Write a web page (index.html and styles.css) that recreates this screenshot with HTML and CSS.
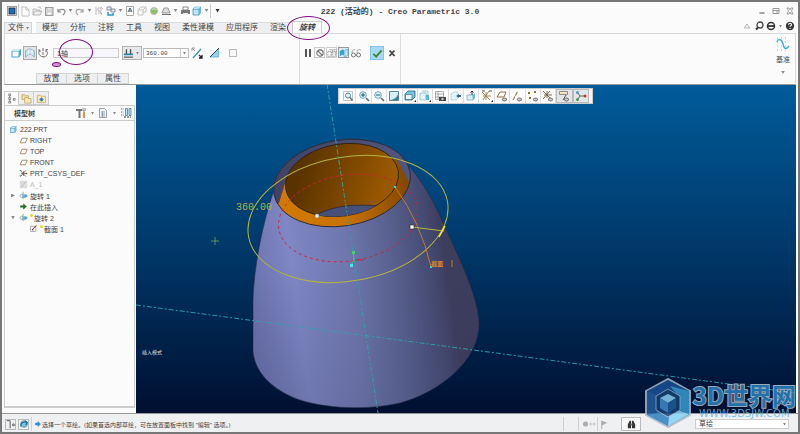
FILE: index.html
```html
<!DOCTYPE html>
<html lang="zh-CN">
<head>
  <meta charset="UTF-8">
  <title>222 (活动的) - Creo Parametric 3.0</title>
  <link rel="stylesheet" href="styles.css">
</head>
<body>
  <!-- shared icons -->
  <svg class="sprite" aria-hidden="true">
    <symbol id="i-app" viewBox="0 0 12 12"><rect x="1.500" y="1.500" width="9" height="9" fill="#f4f4f4" stroke="#888" stroke-width=".8"/><rect x="3" y="3" width="6" height="6" fill="#1671b8" stroke="#223" stroke-width=".8"/></symbol>
    <symbol id="i-new" viewBox="0 0 12 12"><path d="M3 2h4l3 3v6H3z M7 2v3h3" fill="#fff" stroke="#b5b5b5" stroke-width=".8"/></symbol>
    <symbol id="i-open" viewBox="0 0 12 12"><path d="M2 10V4h3l1 1h3v2M2 10l2-4h7l-2 4z M7 3c1-2 3-1 3 1" fill="#eee" stroke="#aaa" stroke-width=".8"/></symbol>
    <symbol id="i-save" viewBox="0 0 12 12"><rect x="2.500" y="2.500" width="7.500" height="8" fill="#e4e4e4" stroke="#999"/><path d="M4 3h5v2H4z M4 7h5v3H4z" fill="#fff" stroke="#aaa" stroke-width=".6"/></symbol>
    <symbol id="i-undo" viewBox="0 0 12 12"><path d="M3 4v3h3M3 7c2-4 7-3 7 0 0 1-1 2-2 3" fill="none" stroke="#8b8b8b" stroke-width="1.200"/></symbol>
    <symbol id="i-redo" viewBox="0 0 12 12"><path d="M9 4v3H6M9 7c-2-4-7-3-7 0 0 1 1 2 2 3" fill="none" stroke="#a5a5a5" stroke-width="1.200"/></symbol>
    <symbol id="i-regen" viewBox="0 0 12 12"><path d="M3 2v8M5 3h3v3H5zM5 8h4M8 2l2 2M7 6l2 4" fill="none" stroke="#bbb"/></symbol>
    <symbol id="i-windows" viewBox="0 0 12 12"><path d="M2 2h4v3H2zM6 4h4v3H6z" fill="#dff1fa" stroke="#778" stroke-width=".8"/><path d="M3 7v3h5V8" fill="none" stroke="#2893c8" stroke-width="1.500"/></symbol>
    <symbol id="i-page" viewBox="0 0 12 12"><path d="M2.500 1.500h7v9h-7z" fill="#fff" stroke="#aaa"/><path d="M4 7l2-4 2 4M5 6h2" fill="none" stroke="#345" stroke-width=".9"/></symbol>
    <symbol id="i-boxes" viewBox="0 0 12 12"><path d="M2 5h5v5H2zM5 2h5v5H7M2 5l3-3M7 5l3-3" fill="none" stroke="#c4c4c4"/></symbol>
    <symbol id="i-ball" viewBox="0 0 12 12"><circle cx="6" cy="6" r="3.500" fill="#85c266" stroke="#bbb"/><path d="M4 5c2-2 3-1 4 0" stroke="#dff4c8" fill="none"/></symbol>
    <symbol id="i-scan" viewBox="0 0 12 12"><path d="M2 8l2-5h4l2 5z" fill="#ddd" stroke="#999"/><path d="M2 9h9v1H2z" fill="#777"/></symbol>
    <symbol id="i-print" viewBox="0 0 12 12"><path d="M4 2h5v3H4z" fill="#fff" stroke="#888"/><path d="M2 5h9v4H2z" fill="#777"/><path d="M4 8h5v2H4z" fill="#eee"/></symbol>
    <symbol id="i-cube" viewBox="0 0 12 12"><path d="M2 4h6v6H2z" fill="#bfe5f5" stroke="#3b97bd" stroke-width=".8"/><path d="M2 4l2-2h6v6l-2 2V4z" fill="#64b7dc"/><path d="M2 4l2-2h6L8 4z" fill="#e5f6fc" stroke="#3b97bd" stroke-width=".5"/></symbol>
    <symbol id="i-solid" viewBox="0 0 12 12"><path d="M2 4h7v6H2z" fill="#fff" stroke="#4aa3c9" /><path d="M2 4l1.500-2h7.500v6L9 10V4z" fill="#4aa9cf"/><path d="M2 4l1.500-2H11L9 4z" fill="#cbeaf6"/></symbol>
    <symbol id="i-surface" viewBox="0 0 12 12"><path d="M1.500 10V4l3-2c1 0 3 0 4 1l2 1v6l-2.500-2c-1-1-3-1-4 0z" fill="#c5e7f5" stroke="#86a8b8" stroke-width=".8"/><path d="M4.500 2.500v5M8 3v5" stroke="#eefaff"/></symbol>
    <symbol id="i-revolve" viewBox="0 0 12 12"><path d="M6 1v9" stroke="#666" stroke-dasharray="3 1"/><path d="M3 3c-3 3 0 7 4 7 4-1 4-5 2-7M9 5V2.500h2M1 3h2v2" fill="none" stroke="#666" stroke-width=".9"/></symbol>
    <symbol id="i-depth" viewBox="0 0 12 12"><path d="M1 10.500h10" stroke="#333"/><path d="M1 7.500h10" stroke="#2183b5" stroke-width="1.800"/><path d="M3 2h1.500v5H3zM7.500 2H9v5H7.500z" fill="#555"/></symbol>
    <symbol id="i-flip" viewBox="0 0 12 12"><path d="M2 11l8-9" stroke="#3d89ad" stroke-width="1.200"/><path d="M1 4V1h3M1 1l3 3" stroke="#999" fill="none"/><path d="M11 8v3H8M11 11L8 8" stroke="#222" stroke-width="1.300" fill="none"/></symbol>
    <symbol id="i-cut" viewBox="0 0 12 12"><path d="M1 10L9.500 1.500V10z" fill="#8fd5ee" stroke="#67a6bf" stroke-width=".8"/><path d="M1 10L10 1" stroke="#345"/></symbol>
    <symbol id="i-pause" viewBox="0 0 12 12"><path d="M3 2h2v8H3zM7 2h2v8H7z" fill="#555"/></symbol>
    <symbol id="i-none" viewBox="0 0 12 12"><circle cx="6" cy="6" r="3.800" fill="none" stroke="#666" stroke-width="1.300"/><path d="M3.500 3.500l5 5" stroke="#666" stroke-width="1.300"/></symbol>
    <symbol id="i-ghost" viewBox="0 0 12 12"><path d="M1 4h4v6H1zM3 2h4v6M6 4h4v6H6zM8 2h3v6" fill="none" stroke="#888" stroke-dasharray="1.500 .7"/></symbol>
    <symbol id="i-attach" viewBox="0 0 12 12"><path d="M1 4l2-2h3v6H4L1 10z" fill="#35a5d6"/><path d="M6 4l2-2h3v6L9 10H6z" fill="#b6e4f5" stroke="#3993b8" stroke-width=".7"/></symbol>
    <symbol id="i-glasses" viewBox="0 0 12 12"><circle cx="3.500" cy="8" r="2" fill="none" stroke="#777" /><circle cx="8.500" cy="8" r="2" fill="none" stroke="#777"/><path d="M2 6c0-3 2-4 3-3M7 6c0-3 2-4 4-3M5.500 8h1" fill="none" stroke="#888" stroke-width=".8"/></symbol>
    <symbol id="i-check" viewBox="0 0 12 12"><path d="M1.500 6.500l3 3 6-7" fill="none" stroke="#3d8a2c" stroke-width="2"/></symbol>
    <symbol id="i-cross" viewBox="0 0 12 12"><path d="M3.500 3.500l5 5.500M8.500 3.500l-5 5.500" stroke="#444" stroke-width="1.800"/></symbol>
    <symbol id="i-up" viewBox="0 0 12 12"><path d="M3 8l3-4 3 4z" fill="#eee" stroke="#bbb"/></symbol>
    <symbol id="i-search" viewBox="0 0 12 12"><circle cx="7" cy="5" r="3" fill="#fff" stroke="#444" stroke-width="1.300"/><path d="M5 7.500L3 9.500" stroke="#333" stroke-width="2"/></symbol>
    <symbol id="i-globe" viewBox="0 0 12 12"><circle cx="6" cy="6" r="3.500" fill="#fff" stroke="#333" stroke-width="1.500"/><path d="M2 6h8" stroke="#333" stroke-width="1.800"/></symbol>
    <symbol id="i-help" viewBox="0 0 12 12"><circle cx="6" cy="6" r="4.200" fill="#3a3a3a"/><path d="M4.500 4.800c0-2 3-2 3 0 0 1-1.500 1-1.500 2M6 8v1" fill="none" stroke="#fff" stroke-width="1.100"/></symbol>
    <symbol id="i-min" viewBox="0 0 12 12"><path d="M3.500 8h5" stroke="#888" stroke-width="1.500"/></symbol>
    <symbol id="i-max" viewBox="0 0 12 12"><path d="M3 3.500h6v5H3z M3 5.500h6M6 7h2" fill="none" stroke="#999"/></symbol>
    <symbol id="i-close" viewBox="0 0 12 12"><path d="M3 3h2l1 2 1-2h2L7.500 6 9 9H7L6 7 5 9H3l1.500-3z" fill="#fff" stroke="#888" stroke-width=".8"/></symbol>
    <symbol id="i-datum" viewBox="0 0 14 14"><path d="M1 1h12M1 5h12M1 9h12M1 13h12" stroke="#aaa" stroke-dasharray="1 3"/><path d="M1 5c1-4 5-3 6 2s3 6 6 2" fill="none" stroke="#3dabd9" stroke-width="1.300"/></symbol>
    <symbol id="i-tree" viewBox="0 0 12 12"><path d="M3 1h2v2H3zM3 5h2v2H3zM3 9h2v2H3zM8 6h2v2H8zM4 3v2M4 7v2" fill="none" stroke="#777" stroke-width=".9"/></symbol>
    <symbol id="i-folders" viewBox="0 0 12 12"><path d="M1 2h3l1 1h3v4H1z" fill="#f3dfaa" stroke="#c29b52" stroke-width=".8"/><path d="M4 5h3l1 1h3v5H4z" fill="#fae9bd" stroke="#c29b52" stroke-width=".8"/></symbol>
    <symbol id="i-fav" viewBox="0 0 12 12"><path d="M1.500 2.500h3l1 1h5v7h-9z" fill="#f7e8bb" stroke="#c8a362" stroke-width=".8"/><path d="M6 4.500l2.500 2.500L6 9.500 3.500 7z" fill="#3f7f99"/></symbol>
    <symbol id="i-tools" viewBox="0 0 12 12"><path d="M1 2h6v2H1zM3.500 4h2v7h-2z" fill="#777"/><path d="M8 5h2v6H8z" fill="#cc9b4d"/><path d="M8 1v3h2V1" fill="none" stroke="#888"/></symbol>
    <symbol id="i-list" viewBox="0 0 12 12"><path d="M2.500 1.500h5l2 2v7h-7z" fill="#f5f8fa" stroke="#888" stroke-width=".8"/><path d="M4 5h4M4 7h4M4 9h4M5.500 4v6" stroke="#789" stroke-width=".7"/></symbol>
    <symbol id="i-columns" viewBox="0 0 12 12"><path d="M1 2h3M1 5h3M1 8h3" stroke="#777" stroke-dasharray="1 .6"/><path d="M5.500 1.500h2v7h-2zM9 1.500h2v7H9z" fill="#bfe4f4" stroke="#4383a0" stroke-width=".8"/><path d="M4 10h7" stroke="#333" stroke-dasharray="2 1"/></symbol>
    <symbol id="i-plane" viewBox="0 0 12 12"><path d="M4 3h7L8.500 9H1.500z" fill="#fff" stroke="#8d6d43"/></symbol>
    <symbol id="i-csys" viewBox="0 0 12 12"><path d="M2 2l7 8M9 2L2 10M6 3v6M3 6h8" stroke="#6d5030" stroke-width="1"/><path d="M1 2h2M1 9h2M10 5v2" stroke="#444"/></symbol>
    <symbol id="i-axis" viewBox="0 0 12 12"><path d="M1 1h10v10H1z" fill="#ddd"/><path d="M3 10L9 2" stroke="#aaa" stroke-dasharray="4 1"/></symbol>
    <symbol id="i-rev" viewBox="0 0 12 12"><path d="M1 7c1-3 3-4 4-3v5c-2 0-3-1-4-2z" fill="#d9eef7" stroke="#6b97aa" stroke-width=".8"/><path d="M6 5c2-1 4-1 5 1s-2 3-5 3z" fill="#52a8cf"/><path d="M5.500 1v10" stroke="#668" stroke-width=".7"/></symbol>
    <symbol id="i-insert" viewBox="0 0 12 12"><path d="M2 5h4V2.500L10 6 6 9.500V7H2z" fill="#1c7d1c" stroke="#124f12" stroke-width=".6"/></symbol>
    <symbol id="i-sketch" viewBox="0 0 12 12"><path d="M2 3h7v7H2z" fill="#fff" stroke="#999"/><path d="M4 8l6-6" stroke="#a33" stroke-width="1.400"/><path d="M4 8h2" stroke="#333"/></symbol>
    <symbol id="i-refit" viewBox="0 0 12 12"><path d="M1.500 1.500h9v9h-9z" fill="#f5fafc" stroke="#aaa" stroke-width=".7"/><circle cx="6" cy="5.500" r="2.500" fill="#e3f4fa" stroke="#4f839b"/><path d="M8 7.500l2.500 3" stroke="#667" stroke-width="1.300"/></symbol>
    <symbol id="i-zoomin" viewBox="0 0 12 12"><circle cx="5" cy="5" r="3.300" fill="#ddf2fb" stroke="#6ea6c2"/><path d="M3 5h4M5 3v4" stroke="#1c5876"/><path d="M8 8l3 3" stroke="#567" stroke-width="1.600"/></symbol>
    <symbol id="i-zoomout" viewBox="0 0 12 12"><circle cx="5" cy="5" r="3.300" fill="#ddf2fb" stroke="#6ea6c2"/><path d="M3 5h4" stroke="#1c5876"/><path d="M8 8l3 3" stroke="#567" stroke-width="1.600"/></symbol>
    <symbol id="i-repaint" viewBox="0 0 12 12"><path d="M1.500 1.500h9v9h-9z" fill="#d9eff8" stroke="#5c8396"/><path d="M2 10c4 0 8-3 8-7v7z" fill="#2f7fa3"/></symbol>
    <symbol id="i-display" viewBox="0 0 12 12"><path d="M1 4l3-3h7v6L8 10H1z" fill="#79c5e4" stroke="#27627e" stroke-width=".8"/><path d="M1.500 4.500H8v5H1.500z" fill="#e9f7fc" stroke="#27627e" stroke-width=".6"/><path d="M12 10v2h-2z" fill="#222"/></symbol>
    <symbol id="i-views" viewBox="0 0 12 12"><path d="M1 3h6v7H1zM3 1h6v7" fill="#e2f5fb" stroke="#93bccd" stroke-width=".8"/><path d="M7 5h3v5H7z" fill="#5bb2d5"/><path d="M12 10v2h-2z" fill="#222"/></symbol>
    <symbol id="i-viewmgr" viewBox="0 0 12 12"><path d="M1.500 1.500h8v8h-8zM1 4h9M1 7h9M4 1v8" fill="none" stroke="#999" stroke-width=".8"/><path d="M5 7h7v4H5z" fill="#444"/><circle cx="8.500" cy="9" r="1.200" fill="#ccc"/></symbol>
    <symbol id="i-persp" viewBox="0 0 12 12"><path d="M1 4l3-2h4v6l-2 2H1z" fill="#e4f5fb" stroke="#b3cdd8" stroke-width=".8"/><path d="M6 6l3-2v4zM9 5h2v2H9z" fill="#316d8a"/></symbol>
    <symbol id="i-section" viewBox="0 0 12 12"><path d="M2 5h6v5H2z" fill="#dff3fa" stroke="#6aaac5" stroke-width=".8"/><path d="M8 5l2-2v5l-2 2z" fill="#66b5d5"/><path d="M7 5V1M5.500 2.500L7 1l1.500 1.500" stroke="#234" fill="none"/></symbol>
    <symbol id="i-datumall" viewBox="0 0 12 12"><path d="M1 2l8 8M8 1L2 10M5 2v8M2 6h8" stroke="#9b7b4c" stroke-width=".9"/><path d="M1 1h3M8 1h3" stroke="#555"/><path d="M12 10v2h-2z" fill="#222"/></symbol>
    <symbol id="i-eyeplane" viewBox="0 0 12 12"><path d="M4 2h6L8 7H1z" fill="#fff" stroke="#8d6d43"/><path d="M6 9.500c2-2 3-2 5 0-2 2-3 2-5 0z" fill="#ccc" stroke="#444" stroke-width=".8"/></symbol>
    <symbol id="i-eyeaxis" viewBox="0 0 12 12"><path d="M2 10L7 1" stroke="#9b7b4c" stroke-width="1.200" stroke-dasharray="4 1"/><path d="M6 9.500c2-2 3-2 5 0-2 2-3 2-5 0z" fill="#ccc" stroke="#444" stroke-width=".8"/></symbol>
    <symbol id="i-eyepoint" viewBox="0 0 12 12"><path d="M1 2l2 2M3 2L1 4M7 1l2 2M9 1L7 3M2 7l2 2M4 7L2 9" stroke="#9b6b2c"/><path d="M6 9.500c2-2 3-2 5 0-2 2-3 2-5 0z" fill="#ccc" stroke="#444" stroke-width=".8"/></symbol>
    <symbol id="i-eyecsys" viewBox="0 0 12 12"><path d="M1 1l7 7M8 1L1 9M5 1v7M2 5h8" stroke="#6d5c40" stroke-width=".9"/><path d="M6 9.500c2-2 3-2 5 0-2 2-3 2-5 0z" fill="#ccc" stroke="#444" stroke-width=".8"/></symbol>
    <symbol id="i-annot" viewBox="0 0 12 12"><path d="M1.500 1.500h8v3h-8z" fill="#f5e6bd" stroke="#777" stroke-width=".8"/><path d="M8 5L5 10" stroke="#555"/><path d="M6 9.500c2-2 3-2 5 0-2 2-3 2-5 0z" fill="#ccc" stroke="#444" stroke-width=".8"/></symbol>
    <symbol id="i-spin" viewBox="0 0 12 12"><path d="M2 2l3 4-3 4M5 6h5" fill="none" stroke="#666"/><circle cx="2.500" cy="2.500" r="1.500" fill="#4c9cc0"/><circle cx="2.500" cy="9.500" r="1.500" fill="#3f9c4c"/><circle cx="10" cy="6" r="1.500" fill="#c1392f"/></symbol>
    <symbol id="i-panel" viewBox="0 0 12 12"><path d="M1 2h4M5 2v9" stroke="#777" stroke-width="1.400"/><path d="M8 6h2v2H8z" fill="none" stroke="#555"/></symbol>
    <symbol id="i-web" viewBox="0 0 12 12"><circle cx="6" cy="6" r="4" fill="#7cc4e4" stroke="#4b90b0"/><path d="M2 9c0-5 4-6 8-5M7 2l3 2-2 3" fill="none" stroke="#1f6c92" stroke-width="1.400"/></symbol>
    <symbol id="i-arrow" viewBox="0 0 12 12"><path d="M1 4h5V1l5 5-5 5V8H1z" fill="#2a9bd0" stroke="#1b6c94" stroke-width=".8"/></symbol>
    <symbol id="i-dots" viewBox="0 0 14 12"><circle cx="3.500" cy="6" r="2.500" fill="#aaa"/><circle cx="8.500" cy="6" r="1.500" fill="#d0d0d0"/><circle cx="12" cy="6" r="1.500" fill="#d0d0d0"/></symbol>
    <symbol id="i-flag" viewBox="0 0 12 12"><path d="M3 2v9" stroke="#aaa"/><path d="M3 2l6 2-6 3z" fill="#aaa"/></symbol>
    <symbol id="i-binoc" viewBox="0 0 12 12"><path d="M2 10V6l2-4h1.500v8zM10 10V6L8 2H6.500v8z" fill="#333"/><path d="M5 5h2v2H5z" fill="#777"/></symbol>
  </svg>

  <div class="window">
    <header class="titlebar">
      <div class="quick">
        <button class="ico" aria-label="Creo"><svg><use href="#i-app"/></svg></button>
        <span class="sep"></span>
        <button class="ico" aria-label="新建"><svg><use href="#i-new"/></svg></button>
        <button class="ico" aria-label="打开"><svg><use href="#i-open"/></svg></button>
        <button class="ico" aria-label="保存"><svg><use href="#i-save"/></svg></button>
        <button class="ico" aria-label="撤消"><svg><use href="#i-undo"/></svg></button>
        <span class="caret"></span>
        <button class="ico" aria-label="重做"><svg><use href="#i-redo"/></svg></button>
        <span class="caret"></span>
        <button class="ico" aria-label="重新生成"><svg><use href="#i-regen"/></svg></button>
        <button class="ico" aria-label="窗口"><svg><use href="#i-windows"/></svg></button>
        <span class="caret"></span>
        <button class="ico" aria-label="注释"><svg><use href="#i-page"/></svg></button>
        <button class="ico" aria-label="模型"><svg><use href="#i-boxes"/></svg></button>
        <button class="ico" aria-label="外观"><svg><use href="#i-ball"/></svg></button>
        <button class="ico" aria-label="扫描"><svg><use href="#i-scan"/></svg></button>
        <span class="caret"></span>
        <button class="ico" aria-label="打印"><svg><use href="#i-print"/></svg></button>
        <button class="ico" aria-label="视图"><svg><use href="#i-cube"/></svg></button>
        <span class="caret"></span>
        <span class="sep"></span>
        <span class="caret caret-dark"></span>
      </div>
      <h1>222 (活动的) - Creo Parametric 3.0</h1>
      <div class="win-buttons">
        <button class="ico" aria-label="最小化"><svg><use href="#i-min"/></svg></button>
        <button class="ico" aria-label="最大化"><svg><use href="#i-max"/></svg></button>
        <button class="ico" aria-label="关闭"><svg><use href="#i-close"/></svg></button>
      </div>
    </header>

    <nav class="tabs">
      <button class="tab file">文件<span class="caret"></span></button>
      <button class="tab">模型</button>
      <button class="tab">分析</button>
      <button class="tab">注释</button>
      <button class="tab">工具</button>
      <button class="tab">视图</button>
      <button class="tab">柔性建模</button>
      <button class="tab">应用程序</button>
      <button class="tab">渲染</button>
      <button class="tab active">旋转<span class="mark mark-tab"></span></button>
      <div class="tab-tools">
        <button class="ico" aria-label="折叠"><svg><use href="#i-up"/></svg></button>
        <button class="ico" aria-label="搜索"><svg><use href="#i-search"/></svg></button>
        <button class="ico" aria-label="学习"><svg><use href="#i-globe"/></svg></button>
        <span class="caret"></span>
        <button class="ico" aria-label="帮助"><svg><use href="#i-help"/></svg></button>
      </div>
    </nav>

    <section class="ribbon">
      <div class="dash">
        <div class="dash-row">
          <button class="ico" aria-label="实体"><svg><use href="#i-solid"/></svg></button>
          <button class="ico pressed" aria-label="曲面"><svg><use href="#i-surface"/></svg></button>
          <button class="ico" aria-label="轴"><svg><use href="#i-revolve"/></svg></button>
          <div class="axis-field">
            <input type="text" value="1轴" aria-label="旋转轴">
            <span class="mark mark-axis"></span>
            <span class="mark mark-dot"></span>
          </div>
          <button class="depth" aria-label="角度选项"><svg><use href="#i-depth"/></svg><span class="caret"></span></button>
          <div class="combo">
            <input type="text" value="360.00" aria-label="角度">
            <button aria-label="最近的值"><span class="caret"></span></button>
          </div>
          <button class="ico" aria-label="反向"><svg><use href="#i-flip"/></svg></button>
          <button class="ico cut" aria-label="移除材料"><svg><use href="#i-cut"/></svg></button>
          <input type="checkbox" class="thin" aria-label="加厚草绘">
        </div>
        <div class="dash-tabs">
          <button>放置</button>
          <button>选项</button>
          <button>属性</button>
        </div>
      </div>
      <div class="controls">
        <button class="ico" aria-label="暂停"><svg><use href="#i-pause"/></svg></button>
        <button class="ico boxed" aria-label="无预览"><svg><use href="#i-none"/></svg></button>
        <button class="ico boxed" aria-label="分离"><svg><use href="#i-ghost"/></svg></button>
        <button class="ico boxed on" aria-label="连接"><svg><use href="#i-attach"/></svg></button>
        <button class="ico" aria-label="校验"><svg><use href="#i-glasses"/></svg></button>
        <button class="ok" aria-label="确定"><svg><use href="#i-check"/></svg></button>
        <button class="ico" aria-label="取消"><svg><use href="#i-cross"/></svg></button>
      </div>
      <button class="datum">
        <svg><use href="#i-datum"/></svg>
        基准
        <span class="caret"></span>
      </button>
    </section>

    <main class="work">
      <aside class="side">
        <div class="side-tabs">
          <button class="active" aria-label="模型树"><svg><use href="#i-tree"/></svg></button>
          <button aria-label="文件夹浏览器"><svg><use href="#i-folders"/></svg></button>
          <button aria-label="收藏夹"><svg><use href="#i-fav"/></svg></button>
        </div>
        <div class="side-head">
          <h2>模型树</h2>
          <button class="ico" aria-label="设置"><svg><use href="#i-tools"/></svg></button>
          <span class="caret"></span>
          <button class="ico" aria-label="显示"><svg><use href="#i-list"/></svg></button>
          <span class="caret"></span>
          <button class="ico" aria-label="树列"><svg><use href="#i-columns"/></svg></button>
        </div>
        <ul class="tree">
          <li class="root"><svg><use href="#i-cube"/></svg>222.PRT</li>
          <li><svg><use href="#i-plane"/></svg>RIGHT</li>
          <li><svg><use href="#i-plane"/></svg>TOP</li>
          <li><svg><use href="#i-plane"/></svg>FRONT</li>
          <li><svg><use href="#i-csys"/></svg>PRT_CSYS_DEF</li>
          <li class="off"><svg><use href="#i-axis"/></svg>A_1</li>
          <li class="closed"><svg><use href="#i-rev"/></svg>旋转 1</li>
          <li><svg><use href="#i-insert"/></svg>在此插入</li>
          <li class="open"><svg><use href="#i-rev"/></svg><i class="fresh"></i>旋转 2</li>
          <li class="child"><svg><use href="#i-sketch"/></svg><i class="fresh"></i>截面 1</li>
        </ul>
      </aside>

      <div class="canvas">
        <svg class="model" viewBox="136 85 660 328" preserveAspectRatio="xMidYMid slice">
          <defs>
            <linearGradient id="body" gradientUnits="userSpaceOnUse" x1="252" y1="300" x2="470" y2="270">
              <stop offset="0" stop-color="#6b72ac"/>
              <stop offset=".2" stop-color="#7f87c4"/>
              <stop offset=".45" stop-color="#6f77ae"/>
              <stop offset=".65" stop-color="#596290"/>
              <stop offset=".84" stop-color="#44486e"/>
              <stop offset=".9" stop-color="#3d3d5c"/>
            </linearGradient>
            <linearGradient id="shade" x1="0" y1="0" x2="0" y2="1">
              <stop offset=".4" stop-color="#30365c" stop-opacity="0"/>
              <stop offset="1" stop-color="#30365c" stop-opacity=".2"/>
            </linearGradient>
            <linearGradient id="hole" x1="0" y1="0" x2="1" y2=".3">
              <stop offset=".2" stop-color="#593200"/>
              <stop offset="1" stop-color="#9a5900"/>
            </linearGradient>
            <linearGradient id="rim">
              <stop offset="0" stop-color="#d27a00"/>
              <stop offset=".5" stop-color="#c87200"/>
              <stop offset="1" stop-color="#7d4500"/>
            </linearGradient>
            <linearGradient id="cut">
              <stop offset="0" stop-color="#3f3f60"/>
              <stop offset="1" stop-color="#505884"/>
            </linearGradient>
            <clipPath id="holeClip"><ellipse cx="342" cy="180" rx="57" ry="36" transform="rotate(-9 342 180)"/></clipPath>
            <clipPath id="ringClip"><ellipse cx="342" cy="183" rx="69" ry="43" transform="rotate(-9 342 183)"/></clipPath>
          </defs>

          <!-- cone -->
          <path d="M274 190C263 222 254 265 253 300V350C254 372 272 390 300 400C325 408 365 411 400 403C440 392 480 360 479 323C478 300 466 272 446 229C436 206 424 183 409 166Z" fill="url(#body)"/>
          <path d="M274 190C263 222 254 265 253 300V350C254 372 272 390 300 400C325 408 365 411 400 403C440 392 480 360 479 323C478 300 466 272 446 229C436 206 424 183 409 166Z" fill="url(#shade)" stroke="#252a48" stroke-width=".6"/>

          <!-- open top -->
          <ellipse cx="342" cy="183" rx="69" ry="43" transform="rotate(-9 342 183)" fill="url(#rim)"/>
          <path d="M270 210L279 203L286 180L340 165L397 159L410 184L420 120H260Z" fill="url(#cut)" clip-path="url(#ringClip)"/>
          <ellipse cx="342" cy="183" rx="69" ry="43" transform="rotate(-9 342 183)" fill="none" stroke="#26283c" stroke-width=".9"/>
          <ellipse cx="342" cy="180" rx="57" ry="36" transform="rotate(-9 342 180)" fill="url(#hole)" stroke="#2d220e" stroke-width=".9"/>
          <path d="M316 215C335 205 356 204 378 206L360 220H316Z" fill="#465079" stroke="#2a2a3c" stroke-width=".8" clip-path="url(#holeClip)"/>

          <!-- sketch curves -->
          <ellipse cx="348" cy="218" rx="70" ry="43" transform="rotate(-9 348 218)" fill="none" stroke="#d02038" stroke-width=".9" stroke-dasharray="3 3"/>
          <ellipse cx="348" cy="219" rx="101" ry="62" transform="rotate(-10 348 219)" fill="none" stroke="#b5b53c"/>
          <g stroke="#2fa3ac" stroke-width=".9" stroke-dasharray="5 2 2 2">
            <path d="M327 84L378 413"/>
            <path d="M136 305L796 393"/>
          </g>
          <path d="M395 187Q421 223 431 267" fill="none" stroke="#c27a30"/>
          <path d="M412 227L444 231" stroke="#b5b53c"/>
          <path d="M439 237L445 226" stroke="#f2f230" stroke-width="1.500"/>
          <rect x="410" y="225" width="4" height="4" fill="#fff" stroke="#222" stroke-width=".6"/>
          <circle cx="317" cy="216" r="2.200" fill="#eee" stroke="#555" stroke-width=".5"/>
          <path d="M353 252L354 260L351 265" fill="none" stroke="#35c890"/>
          <path d="M355 260H365" stroke="#d02038" stroke-dasharray="4 1"/>
          <rect x="352" y="251" width="3" height="3" fill="#35d860"/>
          <rect x="350" y="264" width="3" height="3" fill="#4ae4ee"/>
          <rect x="394" y="186" width="2" height="2" fill="#4ad4c8"/>
          <rect x="430" y="266" width="2" height="2" fill="#4ad4c8"/>
          <path d="M211 241H219M215 237V245" stroke="#69a94c" stroke-width=".8"/>
          <text class="dim" x="236" y="210">360.00</text>
          <text class="sec" x="431" y="266">截面</text>
          <path d="M452 260V267" stroke="#c27a30"/>
          <text class="mode" x="142" y="354">插入模式</text>
        </svg>

        <div class="view-bar">
          <button aria-label="重新调整"><svg><use href="#i-refit"/></svg></button>
          <button aria-label="放大"><svg><use href="#i-zoomin"/></svg></button>
          <button aria-label="缩小"><svg><use href="#i-zoomout"/></svg></button>
          <button aria-label="重画"><svg><use href="#i-repaint"/></svg></button>
          <button aria-label="显示样式"><svg><use href="#i-display"/></svg></button>
          <button aria-label="已保存方向"><svg><use href="#i-views"/></svg></button>
          <button aria-label="视图管理器"><svg><use href="#i-viewmgr"/></svg></button>
          <button aria-label="透视图"><svg><use href="#i-persp"/></svg></button>
          <button aria-label="截面"><svg><use href="#i-section"/></svg></button>
          <button aria-label="基准显示"><svg><use href="#i-datumall"/></svg></button>
          <button aria-label="平面显示"><svg><use href="#i-eyeplane"/></svg></button>
          <button aria-label="轴显示"><svg><use href="#i-eyeaxis"/></svg></button>
          <button aria-label="点显示"><svg><use href="#i-eyepoint"/></svg></button>
          <button aria-label="坐标系显示"><svg><use href="#i-eyecsys"/></svg></button>
          <button class="on" aria-label="注释显示"><svg><use href="#i-annot"/></svg></button>
          <button class="on" aria-label="旋转中心"><svg><use href="#i-spin"/></svg></button>
        </div>
      </div>
    </main>

    <footer class="status">
      <button class="boxed ico" aria-label="导航器"><svg><use href="#i-panel"/></svg></button>
      <button class="boxed ico" aria-label="浏览器"><svg><use href="#i-web"/></svg></button>
      <span class="line"></span>
      <svg class="hint"><use href="#i-arrow"/></svg>
      <p>选择一个草绘。(如果首选内部草绘，可在放置面板中找到 "编辑" 选项。)</p>
      <div class="status-right">
        <span class="line"></span>
        <span class="line"></span>
        <svg class="dots"><use href="#i-dots"/></svg>
        <span class="line"></span>
        <svg class="flag"><use href="#i-flag"/></svg>
        <button class="find" aria-label="查找"><svg><use href="#i-binoc"/></svg></button>
        <div class="filter">
          <select aria-label="选择过滤器"><option>草绘</option></select>
          <span class="caret"></span>
        </div>
      </div>
    </footer>

    <div class="logo">
      <svg viewBox="0 0 46 50">
        <path d="M23 1L45 13V37L23 49L1 37V13Z" fill="#1d62a6" stroke="#a9b7c8" stroke-width="2"/>
        <path d="M23 2L44 13L33 19L23 12L6 21L2 13Z" fill="#1a4f94"/>
        <path d="M44 13V36L34 32V19L25 8Z" fill="#3a9bd0"/>
        <path d="M44 36L23 48L14 42L33 32Z" fill="#86d2f2"/>
        <path d="M2 37L23 48L24 39L12 32V18L2 13Z" fill="#2b80be"/>
        <path d="M2 13L12 18V35L2 37Z" fill="#215f9f"/>
        <path d="M23 11L35 18V32L23 39L11 32V18Z" fill="#174274" stroke="#a5c3dc" stroke-width=".8"/>
        <path d="M23 16L31 20L23 25L15 20Z" fill="#8ccdf0"/>
        <path d="M15 20L23 25V35L15 30Z" fill="#3e8dcb"/>
        <path d="M31 20L23 25V35L31 30Z" fill="#225c9c"/>
      </svg>
      <div class="logo-text">
        <strong>3D世界网</strong>
        <span>WWW.3DSJW.COM</span>
      </div>
    </div>
  </div>
</body>
</html>
```
FILE: styles.css
```css
* {
  box-sizing: border-box;
}
body {
  margin: 0;
  font-family: "Liberation Sans", "Noto Sans CJK SC", sans-serif;
  font-size: 7px;
  color: #444;
}
button, input, select {
  font: inherit;
  color: inherit;
  margin: 0;
  padding: 0;
  border: none;
  background: none;
}
h1, h2, p, ul {
  margin: 0;
  padding: 0;
}
.sprite {
  position: absolute;
  width: 0;
  height: 0;
}
.window {
  position: relative;
  display: flex;
  flex-direction: column;
  height: 100vh;
  padding: 0 2px;
  border: 2px solid #777;
  background-color: #fbfbfb;
  overflow: hidden;
}

/* small parts */
.ico {
  display: flex;
  align-items: center;
  justify-content: center;
  flex: none;
  width: 12px;
  height: 12px;
}
.ico svg {
  flex: none;
  width: 12px;
  height: 12px;
}
.caret {
  flex: none;
  width: 7px;
  height: 3px;
  background: #888;
  clip-path: polygon(25% 0, 75% 0, 50% 100%);
}
.caret-dark {
  background: #333;
  margin-left: 2px;
  width: 9px;
  height: 4px;
}
.sep {
  width: 1px;
  height: 14px;
  background-color: #ccc;
}
.mark {
  position: absolute;
  border: 1px solid #850c85;
  border-radius: 50%;
  pointer-events: none;
}

/* title bar */
.titlebar {
  display: grid;
  grid-template-columns: 1fr auto 1fr;
  align-items: center;
  flex: none;
  height: 17px;
}
.quick {
  display: flex;
  align-items: center;
  padding-left: 2px;
}
.titlebar h1 {
  font-family: "Liberation Mono", "Noto Sans CJK SC", monospace;
  font-size: 8px;
  font-weight: bold;
}
.win-buttons {
  display: flex;
  justify-content: flex-end;
  gap: 2px;
}

/* tabs */
.tabs {
  display: flex;
  align-items: flex-end;
  flex: none;
  height: 14px;
}
.tab {
  display: flex;
  align-items: center;
  height: 11px;
  padding: 0 6px;
  font-size: 8px;
  line-height: 10px;
  background-color: #eeeff1;
  border-top: 1px solid #ddd;
}
.tab.file {
  padding: 0 0 0 3px;
  margin-right: 4px;
  border: 1px solid #d5d5d5;
  border-bottom: none;
}
.tab.active {
  position: relative;
  height: 12px;
  background-color: #fbfbfb;
  border: 1px solid #ccc;
  border-bottom: none;
  font-weight: bold;
  font-style: italic;
}
.mark-tab {
  left: -6px;
  top: -6px;
  width: 43px;
  height: 24px;
}
.tab-tools {
  display: flex;
  align-items: center;
  align-self: center;
  margin-left: auto;
}

/* ribbon */
.ribbon {
  display: flex;
  flex: none;
  height: 52px;
  border: 1px solid #d8d8d8;
  border-bottom-color: #999;
}
.dash {
  display: flex;
  flex-direction: column;
  justify-content: space-between;
  flex: 0 0 295px;
  border-right: 1px solid #ddd;
}
.dash-row {
  display: flex;
  align-items: center;
  height: 14px;
  margin-top: 12px;
  padding-left: 5px;
}
.pressed {
  width: 14px;
  height: 14px;
  margin-left: 1px;
  background-color: #e2e4e7;
  border: 1px solid #aaa;
}
.axis-field {
  position: relative;
  margin: 0 3px 0 4px;
}
.axis-field input {
  width: 66px;
  height: 10px;
  padding-left: 3px;
  border: 1px solid #ccc;
  background-color: #f8f6fd;
  display: block;
}
.mark-axis {
  left: 6px;
  top: -9px;
  width: 34px;
  height: 26px;
}
.mark-dot {
  left: -1px;
  top: 14px;
  width: 9px;
  height: 5px;
  background-color: #c99ac9;
}
.depth {
  display: flex;
  align-items: center;
  width: 20px;
  height: 14px;
  background-color: #e6e8ea;
  border: 1px solid #b5b5b5;
}
.depth svg {
  width: 12px;
  height: 12px;
}
.combo {
  display: flex;
  width: 46px;
  height: 10px;
  margin: 0 2px 0 1px;
  border: 1px solid #bbb;
  background-color: #fff;
}
.combo input {
  flex: 1;
  min-width: 0;
  padding-left: 2px;
  font-family: "Liberation Mono", monospace;
  font-size: 6px;
}
.combo button {
  display: flex;
  align-items: center;
  border-left: 1px solid #ccc;
}
.cut {
  margin: 0 8px 0 6px;
}
.thin {
  appearance: none;
  width: 8px;
  height: 8px;
  border: 1px solid #bbb;
}
.dash-tabs {
  display: flex;
  padding-left: 31px;
}
.dash-tabs button {
  width: 31px;
  height: 11px;
  font-size: 8px;
  line-height: 10px;
  background-color: #eeeff1;
  border: 1px solid #d5d5d5;
  border-left: none;
}
.dash-tabs button:first-child {
  border-left: 1px solid #d5d5d5;
}
.controls {
  display: flex;
  align-items: flex-start;
  flex: 0 0 101px;
  padding: 13px 2px 0;
  border-right: 1px solid #ddd;
}
.boxed {
  width: 11px;
  height: 11px;
  border: 1px solid #ccc;
  margin-right: 1px;
}
.boxed svg {
  width: 10px;
  height: 10px;
}
.boxed.on {
  background-color: #dcebf2;
  border-color: #999;
}
.ok {
  display: flex;
  align-items: center;
  justify-content: center;
  width: 14px;
  height: 14px;
  margin: -1px 2px 0 8px;
  background-color: #a5dafc;
  border: 1px solid #84c3ea;
}
.ok svg {
  width: 11px;
  height: 11px;
}
.datum {
  display: flex;
  flex-direction: column;
  align-items: center;
  gap: 3px;
  margin-left: auto;
  padding: 3px 5px;
}
.datum svg {
  width: 14px;
  height: 14px;
}
.datum .caret {
  margin-top: 4px;
}

/* work area */
.work {
  display: flex;
  flex: 1;
  min-height: 0;
}
.side {
  display: flex;
  flex-direction: column;
  flex: 0 0 132px;
  padding: 6px 1px 5px 0;
}
.side-tabs {
  display: flex;
}
.side-tabs button {
  display: flex;
  align-items: center;
  justify-content: center;
  width: 15px;
  height: 14px;
  background-color: #eeeff1;
  border: 1px solid #ccc;
  border-left: none;
}
.side-tabs .active {
  background-color: #fbfbfb;
  border-left: 1px solid #ccc;
  border-bottom: none;
}
.side-tabs svg {
  width: 11px;
  height: 11px;
}
.side-head {
  display: flex;
  align-items: center;
  height: 16px;
  padding: 0 2px 0 9px;
  border: 1px solid #ccc;
}
.side-head h2 {
  font-size: 7px;
  margin-right: auto;
}
.side-head .caret {
  margin: 0 1px 0 2px;
}
.side-head .ico + .caret + .ico:last-child {
  margin-left: 1px;
}
.tree {
  flex: 1;
  padding-top: 3px;
  list-style: none;
  border: 1px solid #ccc;
  border-top: none;
  border-bottom-width: 2px;
}
.tree li {
  display: flex;
  align-items: center;
  height: 11px;
  padding-left: 14px;
  white-space: pre;
}
.tree svg {
  width: 9px;
  height: 9px;
  margin-right: 2px;
}
.tree .root {
  padding-left: 4px;
}
.tree .child {
  padding-left: 24px;
}
.tree .off {
  color: #bbb;
}
.tree .closed, .tree .open {
  padding-left: 6px;
}
.tree .closed::before, .tree .open::before {
  content: "";
  width: 4px;
  height: 4px;
  margin-right: 4px;
  background-color: #888;
  clip-path: polygon(0 0, 100% 50%, 0 100%);
}
.tree .open::before {
  clip-path: polygon(0 0, 100% 0, 50% 100%);
}
.fresh {
  align-self: flex-start;
  width: 3px;
  height: 3px;
  margin: 2px 1px 0 0;
  background-color: #e3d820;
  border-radius: 50%;
}
.canvas {
  position: relative;
  flex: 1;
  min-width: 0;
  background: linear-gradient(#005c9a, #003869 50%, #000f30);
}
.model {
  display: block;
  width: 100%;
  height: 100%;
}
.dim {
  font: 10px "Liberation Mono", monospace;
  fill: #adb04a;
}
.sec {
  font-size: 6px;
  font-weight: bold;
  fill: #e08a20;
}
.mode {
  font-size: 5px;
  fill: #ddd;
}
.view-bar {
  position: absolute;
  left: 202px;
  top: 3px;
  display: flex;
  width: 255px;
  height: 16px;
  padding: 0 3px 0 2px;
  background-color: #f4f4f4;
  border: 1px solid #ccc;
}
.view-bar button {
  display: flex;
  align-items: center;
  justify-content: center;
  flex: 1;
  background-color: #fff;
  border-right: 1px solid #ddd;
}
.view-bar .on {
  background-color: #e3e5e8;
  border: 1px solid #bbb;
}
.view-bar svg {
  width: 12px;
  height: 12px;
  flex: none;
}

/* status bar */
.status {
  display: flex;
  align-items: center;
  flex: none;
  height: 19px;
  margin: 0 -2px;
  padding: 2px 9px 0 3px;
  background-color: #eff0f2;
  border-top: 1px solid #999;
}
.status .boxed {
  margin-right: 2px;
  border-color: #bbb;
}
.line {
  width: 1px;
  height: 14px;
  background-color: #d0d0d0;
}
.hint {
  width: 6px;
  height: 6px;
  margin: 0 1px 0 3px;
}
.status p {
  font-size: 6px;
  white-space: nowrap;
}
.status-right {
  display: flex;
  align-items: center;
  margin-left: auto;
}
.status-right .line + .line {
  margin-left: 14px;
}
.dots {
  width: 14px;
  height: 12px;
  margin: 0 1px 0 3px;
}
.flag {
  width: 11px;
  height: 11px;
  margin: 0 11px 0 1px;
}
.find {
  display: flex;
  align-items: center;
  justify-content: center;
  width: 20px;
  height: 14px;
  margin-right: 54px;
  border: 1px solid #bbb;
  background-color: #f8f8f8;
}
.find svg {
  width: 11px;
  height: 11px;
}
.filter {
  display: flex;
  align-items: center;
  width: 94px;
  height: 10px;
  border: 1px solid #ccc;
  background-color: #fff;
}
.filter select {
  appearance: none;
  flex: 1;
  height: 8px;
  padding-left: 3px;
  line-height: 8px;
}

/* logo over the canvas corner */
.logo {
  position: absolute;
  right: 2px;
  bottom: 4px;
  display: flex;
  align-items: center;
  gap: 2px;
  opacity: .85;
  pointer-events: none;
}
.logo svg {
  width: 46px;
  height: 50px;
}
.logo-text {
  display: flex;
  flex-direction: column;
  align-items: center;
  padding-bottom: 5px;
}
.logo strong {
  font-family: "Noto Sans CJK SC", sans-serif;
  font-size: 24px;
  line-height: 24px;
  color: #2b82bd;
  -webkit-text-stroke: 2px #b3c3d4;
  paint-order: stroke fill;
}
.logo span {
  margin-top: 3px;
  font-family: "DejaVu Sans", sans-serif;
  font-size: 10px;
  line-height: 8px;
  color: #6ab8e2;
}
```
